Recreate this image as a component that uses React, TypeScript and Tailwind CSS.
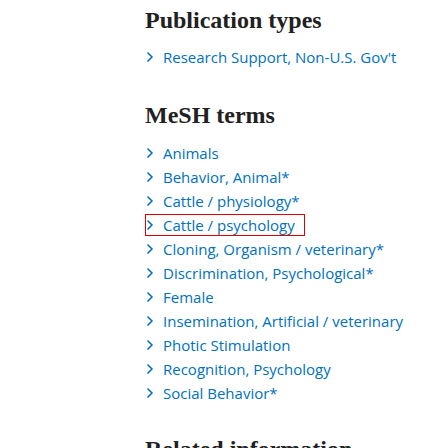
import React from "react";

const Chevron = () => (
  <svg width="8" height="12" viewBox="0 0 8 12" className="shrink-0" aria-hidden>
    <path d="M1.5 1.5 L6 6 L1.5 10.5" fill="none" stroke="#0071bc" strokeWidth="1.5" />
  </svg>
);

const Item = ({ text, boxed }: { text: string; boxed?: boolean }) => (
  <li
    className={
      "flex items-center " +
      (boxed ? "h-[22px] my-[1px] border border-[#e00000] w-[160px]" : "h-6")
    }
  >
    <span className={"flex justify-start " + (boxed ? "w-[17px]" : "w-[18px] pl-[1px]")}>
      <Chevron />
    </span>
    <span className="text-[#0071bc]">{text}</span>
  </li>
);

const H = ({ children, className = "" }: { children: React.ReactNode; className?: string }) => (
  <h2
    className={"text-[24px] font-bold text-[#212121] leading-[30px] " + className}
    style={{ fontFamily: "'Liberation Serif', serif" }}
  >
    {children}
  </h2>
);

export default function App() {
  const mesh = [
    "Animals",
    "Behavior, Animal*",
    "Cattle / physiology*",
    "Cattle / psychology",
    "Cloning, Organism / veterinary*",
    "Discrimination, Psychological*",
    "Female",
    "Insemination, Artificial / veterinary",
    "Photic Stimulation",
    "Recognition, Psychology",
    "Social Behavior*",
  ];
  return (
    <div
      className="w-[448px] h-[448px] overflow-hidden bg-white pl-[145px] pt-[5px]"
      style={{ fontFamily: "'Open Sans', sans-serif" }}
    >
      <H>Publication types</H>
      <ul className="mt-[10px] text-[15px]">
        <Item text="Research Support, Non-U.S. Gov't" />
      </ul>
      <H className="mt-[31px]">MeSH terms</H>
      <ul className="mt-[11px] text-[15px]">
        {mesh.map((m) => (
          <Item key={m} text={m} boxed={m === "Cattle / psychology"} />
        ))}
      </ul>
      <H className="mt-[29px]">Related information</H>
    </div>
  );
}
